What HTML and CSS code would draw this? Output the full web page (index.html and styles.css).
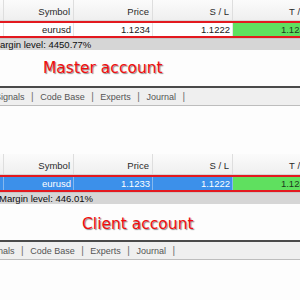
FILE: index.html
```html
<!DOCTYPE html>
<html lang="en">
<head>
  <meta charset="UTF-8">
  <title>Master and client account</title>
  <link rel="stylesheet" href="styles.css">
</head>
<body>
  <div class="screen">
    <!-- Master terminal -->
    <div class="panel">
      <div class="grid head">
        <div class="cell"></div>
        <div class="cell">Symbol</div>
        <div class="cell">Price</div>
        <div class="cell">S / L</div>
        <div class="cell">T / P</div>
      </div>
      <div class="frame">
        <div class="grid row">
          <div class="cell"></div>
          <div class="cell">eurusd</div>
          <div class="cell">1.1234</div>
          <div class="cell">1.1222</div>
          <div class="cell tp">1.1240</div>
        </div>
      </div>
      <div class="margin master-margin">Margin level: 4450.77%</div>
      <div class="caption master-caption">Master account</div>
      <div class="tabs master-tabs">
        <span>Signals</span><span class="bar">|</span>
        <span>Code Base</span><span class="bar">|</span>
        <span>Experts</span><span class="bar">|</span>
        <span>Journal</span><span class="bar">|</span>
      </div>
    </div>

    <!-- Client terminal -->
    <div class="panel client">
      <div class="grid head">
        <div class="cell"></div>
        <div class="cell">Symbol</div>
        <div class="cell">Price</div>
        <div class="cell">S / L</div>
        <div class="cell">T / P</div>
      </div>
      <div class="frame">
        <div class="grid row selected">
          <div class="cell"></div>
          <div class="cell">eurusd</div>
          <div class="cell">1.1233</div>
          <div class="cell">1.1222</div>
          <div class="cell tp">1.1240</div>
        </div>
      </div>
      <div class="margin client-margin">Margin level: 446.01%</div>
      <div class="caption client-caption">Client account</div>
      <div class="tabs client-tabs">
        <span>Signals</span><span class="bar">|</span>
        <span>Code Base</span><span class="bar">|</span>
        <span>Experts</span><span class="bar">|</span>
        <span>Journal</span><span class="bar">|</span>
      </div>
    </div>
  </div>
</body>
</html>
```

FILE: styles.css
```css
body {
  margin: 0;
  background-color: #fdfdfd;
  font-family: "Liberation Sans", Arial, sans-serif;
}
.screen {
  width: 300px;
  height: 300px;
  overflow: hidden;
}
.panel {
  width: 300px;
  overflow: hidden;
}
.client {
  margin-top: 48px;
}
.grid {
  display: grid;
  grid-template-columns: 4px 70px 79px 80px 80px;
  width: 313px;
}
.cell {
  border-right: 1px solid #dedede;
  text-align: right;
  padding-right: 3px;
  font-size: 9.5px;
  white-space: nowrap;
  overflow: hidden;
}
.head {
  height: 20px;
  border-bottom: 1px solid #d6d6d6;
  background: linear-gradient(#fbfbfb, #efefef);
  color: #2a2a2a;
}
.head .cell {
  display: flex;
  align-items: flex-end;
  justify-content: flex-end;
  padding-bottom: 3px;
}
.frame {
  border-top: 2px solid #e3191f;
  border-bottom: 2px solid #e3191f;
  width: 313px;
}
.row {
  height: 13px;
  line-height: 13px;
  background-color: #fff;
  color: #1a1a1a;
}
.row .cell {
  border-right-color: #e4e4e4;
  padding-right: 2px;
}
.row .tp {
  background-color: #5fe05f;
  color: #1d3a1d;
}
.selected {
  background-color: #3c90ea;
  color: #fff;
}
.selected .cell {
  border-right-color: #86b8ee;
}
.margin {
  height: 11px;
  line-height: 11px;
  border-top: 1px solid #c6c6c6;
  background-color: #d6d6d6;
  font-size: 9.5px;
  color: #0d0d0d;
  white-space: nowrap;
}
.master-margin {
  text-indent: -8px;
}
.client-margin {
  text-indent: -1px;
}
.caption {
  height: 36px;
  line-height: 36px;
  font-family: "DejaVu Sans", Verdana, sans-serif;
  font-size: 15.5px;
  color: #f20d0d;
  text-shadow: 1px 1px 1px #8a8a8a;
  white-space: nowrap;
}
.master-caption {
  padding-left: 43px;
}
.client-caption {
  padding-left: 82px;
  line-height: 41px;
}
.tabs {
  display: flex;
  align-items: center;
  gap: 6.5px;
  height: 17px;
  border-top: 2px solid #4a4a4a;
  border-bottom: 1px solid #bdbdbd;
  background-color: #efefef;
  font-size: 9px;
  color: #555;
  white-space: nowrap;
}
.tabs .bar {
  color: #6e6e6e;
  font-size: 10px;
}
.master-tabs span:first-child {
  margin-left: -5px;
}
.client-tabs span:first-child {
  margin-left: -15px;
}
```
